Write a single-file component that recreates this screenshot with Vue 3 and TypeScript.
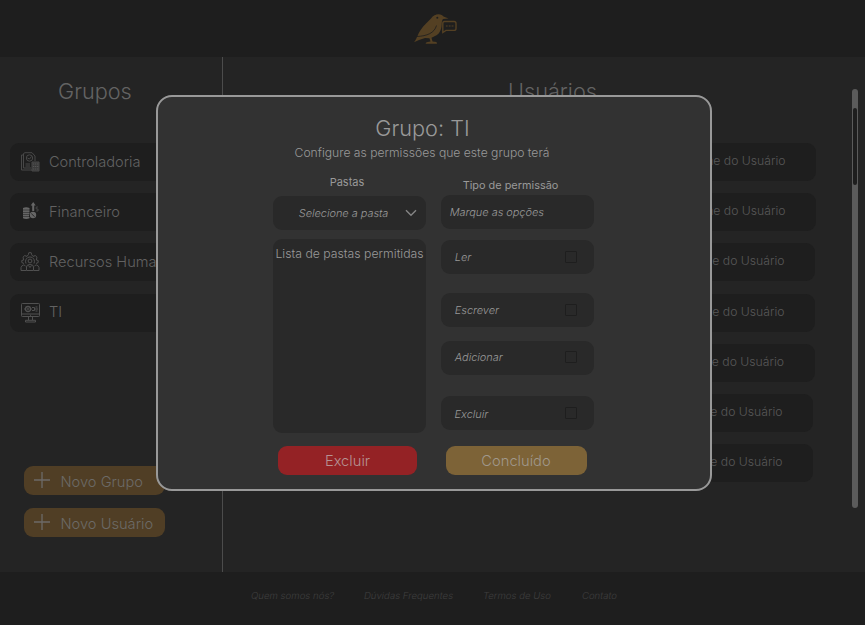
<script setup lang="ts">
import { ref } from 'vue'

type GroupIcon = 'ledger' | 'coins' | 'people' | 'monitor'

interface Group {
  name: string
  icon: GroupIcon
}

interface Permission {
  label: string
  checked: boolean
}

const groups: Group[] = [
  { name: 'Controladoria', icon: 'ledger' },
  { name: 'Financeiro', icon: 'coins' },
  { name: 'Recursos Humanos', icon: 'people' },
  { name: 'TI', icon: 'monitor' },
]

// Right inset of every user card; the list tapers slightly toward the bottom.
const userInsets: number[] = [49, 49, 50, 50, 50.5, 52, 52]

const permissions = ref<Permission[]>([
  { label: 'Ler', checked: false },
  { label: 'Escrever', checked: false },
  { label: 'Adicionar', checked: false },
  { label: 'Excluir', checked: false },
])

const links: string[] = ['Quem somos nós?', 'Dúvidas Frequentes', 'Termos de Uso', 'Contato']
</script>

<template>
  <div class="page">
    <header class="topbar">
      <svg class="logo" viewBox="0 0 44 32" width="44" height="32">
        <path
          fill="#544023"
          fill-rule="evenodd"
          d="M0 28.200 C3.500 24 3.500 20 7 15.500 C9.500 11 14 8 17 4.500 C19 1.500 22 0.200 24.500 0.200 C27 0.300 28.800 1.400 29.500 2.600 L34.500 4.600 L29 5 C28 6 27.800 8 27.700 10.500 C27.500 16 25.500 20 21 22 L17.500 23.800 L18.500 27.500 L22.500 28 L23 29.700 L11.500 29.700 L12.500 28.200 L16.500 27.500 L15.500 24.200 L11 24 L5 26 Z M22.300 3.700 a1 1 0 1 0 2 0 a1 1 0 1 0 -2 0 Z"
        />
        <path d="M3 22.500 C13 22 20.500 19 22.500 11.500" fill="none" stroke="#1e1e1e" stroke-width="0.800" />
        <path d="M30.500 7.500 H40 Q42 7.500 42 9.500 V14.500 Q42 16.400 40 16.400 H32 L28.800 18.500 V9.500 Q28.800 7.500 30.500 7.500 Z" fill="#1e1e1e" stroke="#544023" stroke-width="1.400" />
        <path d="M31.800 12 H39.500" stroke="#544023" stroke-width="1.200" stroke-dasharray="1.900 1" />
      </svg>
    </header>

    <main class="content">
      <aside class="sidebar">
        <h2 class="heading groups-heading">Grupos</h2>
        <ul class="groups">
          <li v-for="group in groups" :key="group.name" class="group">
            <svg class="group-icon" viewBox="0 0 20 20" width="20" height="20">
              <g v-if="group.icon === 'ledger'" fill="none" stroke="#484848" stroke-width="1">
                <path d="M3 3 H1.500 V18 H12 M3.500 16 V1.500 L5 0.700 H12 L15 4 V9 M3.500 16 H11" />
                <circle cx="9.500" cy="6" r="3.200" />
                <path d="M7.500 6 L9.500 7 L11.500 4.500 M5.500 12 H10 M5.500 14 H10" />
                <path d="M12 10 H19 V19 H12 Z" fill="#3b3b3b" />
                <path d="M13 12 H18.500 M13 14.500 H18.500 M13 17 H18.500" stroke="#555" stroke-dasharray="1.300 0.700" />
              </g>
              <g v-else-if="group.icon === 'coins'" fill="#666">
                <path d="M3 6 Q6 4.500 9.500 6 V7.700 H3 Z M3 8.200 H9.500 V10 H3 Z M3 10.500 H9.500 V12.200 H3 Z M3 12.700 H9 V14.400 H3 Z M3 14.900 H9.500 V16.300 Q6 17.700 3 16.300 Z" />
                <path d="M13.200 0 L15.700 3.500 H14.200 V9 H12.200 V3.500 H10.700 Z" />
                <circle cx="13" cy="13" r="3.200" />
                <path d="M11.300 11.600 L14.600 14.700" stroke="#222" stroke-width="0.900" />
                <path d="M18 5 H16.200 V7 H18 V9 H16.200" fill="none" stroke="#484848" stroke-width="0.900" />
              </g>
              <g v-else-if="group.icon === 'people'" fill="none" stroke="#505050" stroke-width="1">
                <path d="M4 11.500 L1.800 10.500 V8.500 L3.700 8 L3 5.200 L4.700 3.600 L7 4.400 L8.300 2.700 L8.800 0.700 H11.200 L11.700 2.700 L13 4.400 L15.300 3.600 L17 5.200 L16.300 8 L18.200 8.500 V10.500 L16 11.500" />
                <path d="M6 11.500 A4.500 4.500 0 1 1 14 11.500" />
                <circle cx="10" cy="9" r="1.900" />
                <path d="M6.500 18.500 V15 Q6.500 12.500 10 12.500 Q13.500 12.500 13.500 15 V18.500 Z M6 18.500 H1 V15.500 Q1 14 3.500 13 Q5 13 6 14.500 M14 18.500 H19 V15.500 Q19 14 16.500 13 Q15 13 14 14.500 M8.500 13.500 L10 15.500 L11.500 13.500" />
              </g>
              <g v-else fill="none" stroke="#505050" stroke-width="1">
                <rect x="1.500" y="0.500" width="18" height="13" rx="0.800" />
                <path d="M1.500 11 H19.500 M8.500 13.500 V17 M12.500 13.500 V17 M5.500 19 V17.300 H15.500 V19 Z M12 4.500 H14.500 V7.500 H12 M15 6 H18 M15.500 4 H17.500 M15.500 8 H17.500" />
                <circle cx="8" cy="6" r="2.500" stroke-width="1.300" />
                <circle cx="8" cy="6" r="0.600" />
                <path d="M4 6 H5.500 M10.500 6 H12 M10 12.300 H11" />
              </g>
            </svg>
            <span>{{ group.name }}</span>
          </li>
        </ul>
        <div class="create">
          <button v-for="label in ['Novo Grupo', 'Novo Usuário']" :key="label" class="create-button">
            <svg viewBox="0 0 16 16" width="16" height="16">
              <path d="M8 0 V16 M0 8 H16" stroke="#6c6a67" stroke-width="1.300" />
            </svg>
            <span>{{ label }}</span>
          </button>
        </div>
      </aside>

      <section class="users">
        <h2 class="heading users-heading">Usuários</h2>
        <ul class="user-list">
          <li v-for="(inset, i) in userInsets" :key="i" class="user" :style="{ marginRight: inset + 'px' }">
            Nome do Usuário
          </li>
        </ul>
        <div class="track"><div class="thumb"></div></div>
      </section>
    </main>

    <footer class="footer">
      <a v-for="link in links" :key="link" class="slanted">{{ link }}</a>
    </footer>

    <div class="modal" role="dialog">
      <h1 class="title">Grupo: TI</h1>
      <p class="subtitle">Configure as permissões que este grupo terá</p>
      <div class="columns">
        <div class="column">
          <h3 class="label">Pastas</h3>
          <div class="field select">
            <span class="slanted">Selecione a pasta</span>
            <svg viewBox="0 0 12 8" width="12" height="8">
              <path d="M1 1.200 L6 6.200 L11 1.200" fill="none" stroke="#858585" stroke-width="1.400" />
            </svg>
          </div>
          <div class="folders">Lista de pastas permitidas</div>
          <button class="action danger">Excluir</button>
        </div>
        <div class="column">
          <h3 class="label label-type">Tipo de permissão</h3>
          <div class="field hint"><span class="slanted">Marque as opções</span></div>
          <label v-for="item in permissions" :key="item.label" class="field permission">
            <span class="slanted">{{ item.label }}</span>
            <input v-model="item.checked" type="checkbox" />
          </label>
          <button class="action done">Concluído</button>
        </div>
      </div>
    </div>
  </div>
</template>

<style>
body {
  margin: 0;
  background: #242424;
}
</style>

<style scoped>
.page {
  position: relative;
  display: flex;
  flex-direction: column;
  width: 865px;
  height: 625px;
  overflow: hidden;
  background: #242424;
  font-family: Inter, 'Liberation Sans', sans-serif;
  font-weight: 300;
}
h1, h2, h3, p, ul {
  margin: 0;
  padding: 0;
  font-weight: 300;
  list-style: none;
}
button {
  border: 0;
  padding: 0;
  font: inherit;
}
/* Keeps the upright letterforms, leaning them instead of using the cursive italic. */
.slanted {
  display: inline-block;
  transform: skewX(-10deg);
}
.topbar {
  box-sizing: border-box;
  height: 57px;
  padding: 14px 0 0 414px;
  background: #1e1e1e;
}
.logo {
  display: block;
}
.content {
  display: flex;
  height: 515px;
}
.sidebar {
  box-sizing: border-box;
  display: flex;
  flex-direction: column;
  width: 223px;
  border-right: 1px solid #4c4c4c;
}
.heading {
  color: #636363;
  font-size: 21.700px;
  line-height: 28px;
}
.groups-heading {
  margin: 20px 0 38px 58px;
}
.groups {
  display: flex;
  flex-direction: column;
  gap: 12.200px;
  padding-left: 10px;
}
.group {
  display: flex;
  align-items: center;
  gap: 9px;
  height: 38px;
  padding-left: 10px;
  border-radius: 9px;
  background: #1e1e1e;
  color: #626262;
  font-size: 14.600px;
  line-height: 18px;
  white-space: nowrap;
}
.group span {
  margin-bottom: 1px;
}
.group-icon {
  flex: none;
}
.create {
  display: flex;
  flex-direction: column;
  gap: 13px;
  margin: 134.300px 0 0 24px;
}
.create-button {
  display: flex;
  align-items: center;
  gap: 10.500px;
  width: 141px;
  height: 29px;
  padding-left: 10px;
  border-radius: 9px;
  background: #503e25;
  color: #6c6a67;
  font-size: 14.650px;
  line-height: 18px;
  white-space: nowrap;
}
.create-button span {
  padding-top: 3px;
}
.users {
  display: grid;
  grid-template-columns: 1fr 14px;
  grid-template-rows: 32px 54px auto;
  flex: 1;
}
.users-heading {
  grid-area: 1 / 1 / 3 / 2;
  margin: 20px 0 0 285px;
}
.user-list {
  display: flex;
  grid-area: 3 / 1 / 4 / 3;
  flex-direction: column;
  gap: 12.200px;
}
.user {
  height: 38px;
  margin-left: 300px;
  padding-right: 30.500px;
  border-radius: 9px;
  background: #1e1e1e;
  color: #585858;
  font-size: 12.200px;
  line-height: 35px;
  text-align: right;
}
.track {
  grid-area: 2 / 2 / 4 / 3;
  width: 6px;
  height: 400px;
  margin-left: 0.500px;
  padding-top: 19px;
  border-radius: 3px;
  background: #5b5b5b;
}
.thumb {
  width: 4px;
  height: 77px;
  margin-left: 1px;
  border-radius: 2px;
  background: #1e1e1e;
}
.footer {
  box-sizing: border-box;
  display: flex;
  gap: 30px;
  height: 53px;
  padding: 17px 0 0 249px;
  background: #1e1e1e;
  color: #3f3f3f;
  font-size: 9.650px;
  line-height: 14px;
}
.modal {
  position: absolute;
  top: 95px;
  left: 156px;
  box-sizing: border-box;
  width: 556px;
  height: 396px;
  border: 2px solid #999;
  border-radius: 16px;
  background: #323232;
  color: #999;
}
.title {
  margin: 17px 23px 0 0;
  font-size: 21.700px;
  line-height: 28px;
  text-align: center;
}
.subtitle {
  margin: 2px 24px 0 0;
  font-size: 12.150px;
  line-height: 18px;
  text-align: center;
}
.columns {
  display: flex;
  gap: 15px;
  padding: 12px 0 0 115px;
}
.column {
  width: 153px;
}
.label {
  width: 148px;
  height: 22px;
  font-size: 11px;
  font-weight: 400;
  line-height: 16px;
  text-align: center;
}
.label-type {
  box-sizing: border-box;
  width: 139px;
  height: 21px;
  padding-top: 3px;
  font-size: 10.900px;
  white-space: nowrap;
}
.field {
  box-sizing: border-box;
  display: flex;
  align-items: center;
  height: 34px;
  border-radius: 9px;
  background: #292929;
  font-size: 10.900px;
}
.select {
  justify-content: space-between;
  padding: 0 9px 0 26px;
}
.hint {
  padding-left: 9px;
}
.folders {
  box-sizing: border-box;
  display: flex;
  justify-content: center;
  height: 194px;
  margin-top: 9px;
  padding-top: 6px;
  border-radius: 9px;
  background: #292929;
  font-size: 12.250px;
  line-height: 18px;
  white-space: nowrap;
}
.permission {
  justify-content: space-between;
  margin-top: 11px;
  padding: 0 17px 0 14px;
}
.permission:nth-of-type(2) {
  margin-top: 19px;
}
.permission:nth-of-type(3) {
  margin-top: 14px;
}
.permission:nth-of-type(4) {
  margin-top: 21px;
}
.permission input {
  appearance: none;
  box-sizing: border-box;
  width: 12px;
  height: 12px;
  margin: 0 0 1px;
  border: 1px solid #1e1e1e;
  border-radius: 1px;
}
.permission:nth-of-type(3) span,
.permission:nth-of-type(3) input {
  margin-bottom: 3px;
}
.permission:nth-of-type(4) span {
  padding-top: 2px;
}
.action {
  display: block;
  height: 29px;
  border-radius: 9px;
  color: #a0988c;
  font-size: 14.700px;
}
.danger {
  width: 139px;
  margin: 13px 0 0 5px;
  background: #942225;
  color: #b69293;
}
.done {
  width: 141px;
  margin: 16px 0 0 4.500px;
  background: #7d6337;
}
</style>
